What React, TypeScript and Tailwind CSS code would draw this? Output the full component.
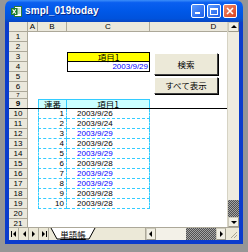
const data = [
  { n: 10, no: '1', d: '2003/9/26', hit: false },
  { n: 11, no: '2', d: '2003/9/24', hit: false },
  { n: 12, no: '3', d: '2003/9/29', hit: true },
  { n: 13, no: '4', d: '2003/9/26', hit: false },
  { n: 14, no: '5', d: '2003/9/29', hit: true },
  { n: 15, no: '6', d: '2003/9/28', hit: false },
  { n: 16, no: '7', d: '2003/9/29', hit: true },
  { n: 17, no: '8', d: '2003/9/29', hit: true },
  { n: 18, no: '9', d: '2003/9/28', hit: false },
  { n: 19, no: '10', d: '2003/9/28', hit: false },
]

const font = "font-['Liberation_Sans','Noto_Sans_CJK_JP',sans-serif]"
const jp = "font-['Noto_Sans_CJK_JP',sans-serif]"
const dither = 'bg-[repeating-conic-gradient(#505050_0%_25%,#a4a4a4_0%_50%)] bg-[length:2px_2px]'

type RowProps = {
  label: string
  short?: boolean
  freeze?: boolean
  b?: React.ReactNode
  c?: React.ReactNode
}

function Row({ label, short, freeze, b, c }: RowProps) {
  return (
    <div className={`flex shrink-0 ${short ? 'h-[7px]' : 'h-[10px]'} ${freeze ? 'border-b border-black' : ''}`}>
      <div
        className={`w-[19px] shrink-0 flex justify-center items-center overflow-hidden bg-[#ebe8dc] border-r border-[#aca899] ${
          short ? 'text-[6px] leading-[6px]' : 'text-[8px] leading-[9px]'
        } ${freeze ? 'font-bold' : 'border-b'}`}
      >
        {label}
      </div>
      <div className="w-[10px] shrink-0" />
      {b ?? <div className="w-[29px] shrink-0" />}
      {c ?? <div className="w-[83px] shrink-0" />}
      <div className="w-[128px] shrink-0" />
    </div>
  )
}

function Arrow({ dir }: { dir: 'up' | 'down' | 'left' | 'right' }) {
  const pts = {
    up: '1,5 4,2 7,5',
    down: '1,3 4,6 7,3',
    left: '5,1 2,4 5,7',
    right: '3,1 6,4 3,7',
  }[dir]
  return (
    <svg width="8" height="8" viewBox="0 0 8 8">
      <polygon points={pts} fill="#000" />
    </svg>
  )
}

function SBtn({ dir, cls }: { dir: 'up' | 'down' | 'left' | 'right'; cls: string }) {
  return (
    <div className={`${cls} shrink-0 flex items-center justify-center bg-[#f1efe4] border border-[#cdcabb] border-r-[#9d9a8a] border-b-[#9d9a8a]`}>
      <Arrow dir={dir} />
    </div>
  )
}

function NavBtn({ first, last, dir }: { first?: boolean; last?: boolean; dir: 'left' | 'right' }) {
  return (
    <div className="w-[10px] shrink-0 h-full flex items-center justify-center border-r border-[#aca899]">
      <svg width="8" height="8" viewBox="0 0 8 8">
        {first && <rect x="1" y="1" width="1" height="6" fill="#000" />}
        {last && <rect x="6" y="1" width="1" height="6" fill="#000" />}
        <polygon points={dir === 'left' ? '6,1 3,4 6,7' : '2,1 5,4 2,7'} fill="#000" />
      </svg>
    </div>
  )
}

export default function App() {
  return (
    <div className={`w-[248px] h-[252px] bg-[#969696] px-[5px] ${font} text-black`}>
      <div className="h-[244px] flex flex-col">
        {/* title bar */}
        <div className="h-[22px] shrink-0 rounded-t-[7px] flex items-center pl-[6px] pr-[6px] bg-[linear-gradient(#3c8ef9_0%,#0a5ff0_12%,#0058e8_50%,#0052dc_85%,#0a45c0_100%)]">
          <svg width="11" height="11" viewBox="0 0 11 11" className="shrink-0">
            <rect x="3.5" y="0.5" width="7" height="10" fill="#fff" stroke="#2d7b37" />
            <path d="M6 3h3.5M6 5h3.5M6 7h3.5" stroke="#8cc28f" />
            <rect x="0" y="2" width="6.5" height="7" fill="#1e7b2c" />
            <path d="M1.6 3.4l3.2 4.4M4.8 3.4l-3.2 4.4" stroke="#fff" strokeWidth="1.1" />
          </svg>
          <span className="ml-[3px] text-white font-bold text-[10px] leading-none tracking-[0.1px] [text-shadow:1px_1px_0_#0a2a8a]">
            smpl_019today
          </span>
          <div className="ml-auto flex gap-[2px]">
            <div className="w-[14px] h-[14px] rounded-[2px] border border-white bg-[linear-gradient(135deg,#5c9bff,#1c5ee8)] flex items-end pl-[3px] pb-[3px]">
              <div className="w-[5px] h-[2px] bg-white" />
            </div>
            <div className="w-[14px] h-[14px] rounded-[2px] border border-white bg-[linear-gradient(135deg,#5c9bff,#1c5ee8)] flex items-center justify-center">
              <div className="w-[8px] h-[7px] border border-white border-t-2" />
            </div>
            <div className="w-[14px] h-[14px] rounded-[2px] border border-white bg-[linear-gradient(135deg,#f08a6a,#d8431f)] flex items-center justify-center">
              <svg width="8" height="8" viewBox="0 0 8 8">
                <path d="M1 1l6 6M7 1l-6 6" stroke="#fff" strokeWidth="1.6" />
              </svg>
            </div>
          </div>
        </div>

        {/* body */}
        <div className="flex-1 flex flex-col border-x-4 border-b-4 border-[#0b3ccc] bg-white">
          <div className="h-[205px] flex shrink-0">
            <div className="w-[218px] relative overflow-hidden flex flex-col">
              {/* column header */}
              <div className="h-[10px] shrink-0 flex text-[8px] leading-[9px] bg-[#ebe8dc]">
                <div className="w-[19px] shrink-0 border-r border-b border-[#aca899]" />
                <div className="w-[10px] shrink-0 border-r border-b border-[#aca899] text-center">A</div>
                <div className="w-[29px] shrink-0 border-r border-b border-[#aca899] text-center">B</div>
                <div className="w-[83px] shrink-0 border-r border-b border-[#aca899] text-center">C</div>
                <div className="w-[128px] shrink-0 border-r border-b border-[#aca899] text-center">D</div>
              </div>
              <Row label="1" />
              <Row label="2" />
              <Row
                label="3"
                c={
                  <div className={`w-[83px] shrink-0 border border-black bg-[#ffff00] text-center text-[8.5px] leading-[8px] ${jp}`}>
                    項目1
                  </div>
                }
              />
              <Row
                label="4"
                c={
                  <div className="w-[83px] shrink-0 border-x border-b border-black text-right pr-[1px] text-[8px] leading-[9px] text-[#0000ff]">
                    2003/9/29
                  </div>
                }
              />
              <Row label="5" />
              <Row label="6" />
              <Row label="7" short />
              <Row
                label="9"
                freeze
                b={
                  <div className={`w-[29px] shrink-0 bg-[#ccffff] border-x border-t border-[#33ccff] text-center text-[8.5px] leading-[8px] ${jp}`}>
                    連番
                  </div>
                }
                c={
                  <div className={`w-[83px] shrink-0 bg-[#ccffff] border-r border-t border-[#33ccff] text-center text-[8.5px] leading-[8px] ${jp}`}>
                    項目1
                  </div>
                }
              />
              {data.map((r) => (
                <Row
                  key={r.n}
                  label={String(r.n)}
                  b={
                    <div className="w-[29px] shrink-0 border-x border-b border-dashed border-[#33ccff] text-right pr-[2px] text-[8px] leading-[9px]">
                      {r.no}
                    </div>
                  }
                  c={
                    <div
                      className={`w-[83px] shrink-0 border-r border-b border-dashed border-[#33ccff] pl-[10px] text-[8px] leading-[9px] ${
                        r.hit ? 'text-[#0000ff]' : 'text-black'
                      }`}
                    >
                      {r.d}
                    </div>
                  }
                />
              ))}
              <Row label="20" />
              <Row label="21" />

              {/* form buttons */}
              <div className={`absolute left-[145px] top-[31px] w-[64px] h-[22px] flex items-center justify-center bg-[#ece9d8] border border-white border-r-[#404040] border-b-[#404040] shadow-[1px_1px_0_#000] text-[8.5px] ${jp}`}>
                検索
              </div>
              <div className={`absolute left-[145px] top-[55px] w-[64px] h-[17px] flex items-center justify-center bg-[#ece9d8] border border-white border-r-[#404040] border-b-[#404040] shadow-[1px_1px_0_#000] text-[8.5px] ${jp}`}>
                すべて表示
              </div>
            </div>

            {/* vertical scrollbar */}
            <div className="w-[12px] shrink-0 flex flex-col bg-[#f3f1e8] border-l border-[#d6d3c4]">
              <SBtn dir="up" cls="h-[10px]" />
              <div className="flex-1 bg-[#efece0]" />
              <div className={`h-[17px] shrink-0 ${dither}`} />
              <SBtn dir="down" cls="h-[10px]" />
            </div>
          </div>

          {/* sheet tabs + horizontal scrollbar */}
          <div className="flex-1 flex bg-[#ece9d8] border-t border-[#aca899]">
            <NavBtn first dir="left" />
            <NavBtn dir="left" />
            <NavBtn dir="right" />
            <NavBtn last dir="right" />
            <div className="w-[48px] shrink-0 relative flex items-center justify-center">
              <svg className="absolute inset-0" width="48" height="12" viewBox="0 0 48 12">
                <polygon points="2,0 46,0 40,11 8,11" fill="#fff" />
                <path d="M2 0L8 11H40L46 0" fill="none" stroke="#000" />
              </svg>
              <span className={`relative text-[8.5px] leading-none underline ${jp}`}>単語帳</span>
            </div>
            <div className="w-[49px] shrink-0 border-r border-[#aca899]" />
            <SBtn dir="left" cls="w-[10px]" />
            <div className="w-[30px] shrink-0 bg-[#f3f1e8]" />
            <div className={`w-[30px] shrink-0 ${dither}`} />
            <SBtn dir="right" cls="w-[10px]" />
            <div className="w-[13px] shrink-0 flex items-end justify-end p-[1px]">
              <svg width="9" height="9" viewBox="0 0 9 9">
                <path d="M8 2L2 8M8 5L5 8" stroke="#a6a392" />
              </svg>
            </div>
          </div>
        </div>
      </div>
    </div>
  )
}
